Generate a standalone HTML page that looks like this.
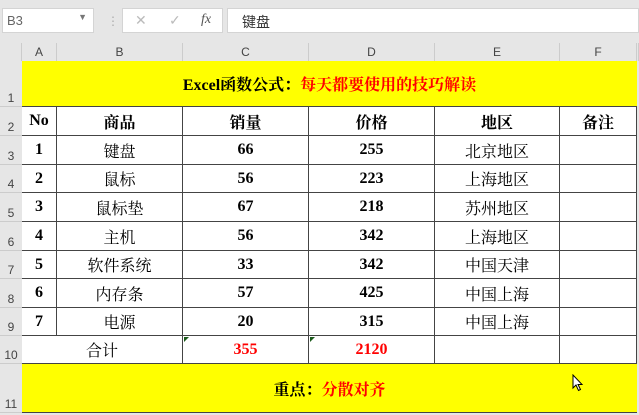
<!DOCTYPE html><html><head><meta charset="utf-8"><style>
*{margin:0;padding:0;box-sizing:border-box}
body{width:639px;height:415px;overflow:hidden;background:#e6e6e6;font-family:"Liberation Serif","Noto Serif CJK SC",serif;position:relative}
.bar{position:absolute;top:0;left:0;width:639px;height:43px;background:#e6e6e6}
.nb{position:absolute;left:2px;top:8px;width:92px;height:25px;background:#fff;border:1px solid #d4d4d4;font:13px "Liberation Sans",sans-serif;color:#666;padding:4px 4px}
.fx{position:absolute;left:122px;top:8px;width:101px;height:25px;background:#fff;border:1px solid #d4d4d4;color:#bbb;font:14px "Liberation Sans",sans-serif}
.fb{position:absolute;left:227px;top:8px;width:412px;height:25px;background:#fff;border:1px solid #d4d4d4;font:14px "Liberation Sans","Noto Sans CJK SC",sans-serif;color:#333;padding:3px 14px}
.ch{position:absolute;top:43px;height:18px;font:12px "Liberation Sans",sans-serif;color:#444;text-align:center;line-height:18px;border-right:1px solid #ccc;background:#e6e6e6}
.rh{position:absolute;left:0;width:22px;font:12px "Liberation Sans",sans-serif;color:#444;text-align:center;border-bottom:1px solid #ccc;background:#e6e6e6;display:flex;align-items:flex-end;justify-content:center;padding-bottom:1px}
.c{position:absolute;display:flex;align-items:center;justify-content:center;font-size:16px;font-weight:bold;color:#000;background:#fff;border-right:1px solid #444;border-bottom:1px solid #444}
.y{background:#ff0;border-right:none}
.r{color:#f00}
.n{font-weight:normal}
</style></head><body>
<div class="bar"></div>
<div class="nb">B3<span style="position:absolute;right:6px;top:3px;font-size:9px;color:#777">▼</span></div>
<div style="position:absolute;left:107px;top:14px;color:#aaa;font-size:12px">⋮</div>
<div class="fx"><span style="position:absolute;left:12px;top:3px">✕</span><span style="position:absolute;left:46px;top:3px">✓</span><span style="position:absolute;left:78px;top:3px;color:#555;font-style:italic;font-family:'Liberation Serif',serif">fx</span></div>
<div class="fb">键盘</div>
<div id="g"></div>
<script>
var cols=[22,57,183,309,435,560,637],names="ABCDEF";
var rows=[61,107,136,165,193,222,251,279,308,336,364,413];
var h="";
h+='<div class="ch" style="left:0;width:22px"></div>';
for(var i=0;i<6;i++)h+='<div class="ch" style="left:'+cols[i]+'px;width:'+(cols[i+1]-cols[i])+'px">'+names[i]+'</div>';
h+='<div class="ch" style="left:637px;width:2px"></div>';
for(var r=0;r<11;r++)h+='<div class="rh" style="top:'+rows[r]+'px;height:'+(rows[r+1]-rows[r])+'px">'+(r+1)+'</div>';
function cell(c1,c2,r,txt,cls){h+='<div class="c '+(cls||'')+'" style="left:'+cols[c1]+'px;top:'+rows[r]+'px;width:'+(cols[c2]-cols[c1])+'px;height:'+(rows[r+1]-rows[r])+'px">'+txt+'</div>';}
cell(0,6,0,'Excel函数公式：<span class="r">每天都要使用的技巧解读</span>','y');
var d=[["No","商品","销量","价格","地区","备注"],["1","键盘","66","255","北京地区",""],["2","鼠标","56","223","上海地区",""],["3","鼠标垫","67","218","苏州地区",""],["4","主机","56","342","上海地区",""],["5","软件系统","33","342","中国天津",""],["6","内存条","57","425","中国上海",""],["7","电源","20","315","中国上海",""]];
for(var r=0;r<d.length;r++)for(var c=0;c<6;c++)cell(c,c+1,r+1,d[r][c],(r>0&&(c==1||c==4))?'n':'');
cell(0,2,9,'合计','n');cell(2,3,9,'355','r');cell(3,4,9,'2120','r');cell(4,5,9,'');cell(5,6,9,'');
cell(0,6,10,'重点：<span class="r">分散对齐</span>','y');
document.getElementById('g').innerHTML=h;
</script>
<div style="position:absolute;left:184px;top:337px;width:0;height:0;border-top:5px solid #1a5a1a;border-right:5px solid transparent"></div>
<div style="position:absolute;left:310px;top:337px;width:0;height:0;border-top:5px solid #1a5a1a;border-right:5px solid transparent"></div>
<svg style="position:absolute;left:572px;top:374px" width="12" height="18" viewBox="0 0 12 18"><path d="M1 1 L1 14 L4 11 L6.5 16.5 L8.5 15.5 L6 10.5 L10 10.5 Z" fill="#fff" stroke="#000" stroke-width="1"/></svg>
</body></html>
